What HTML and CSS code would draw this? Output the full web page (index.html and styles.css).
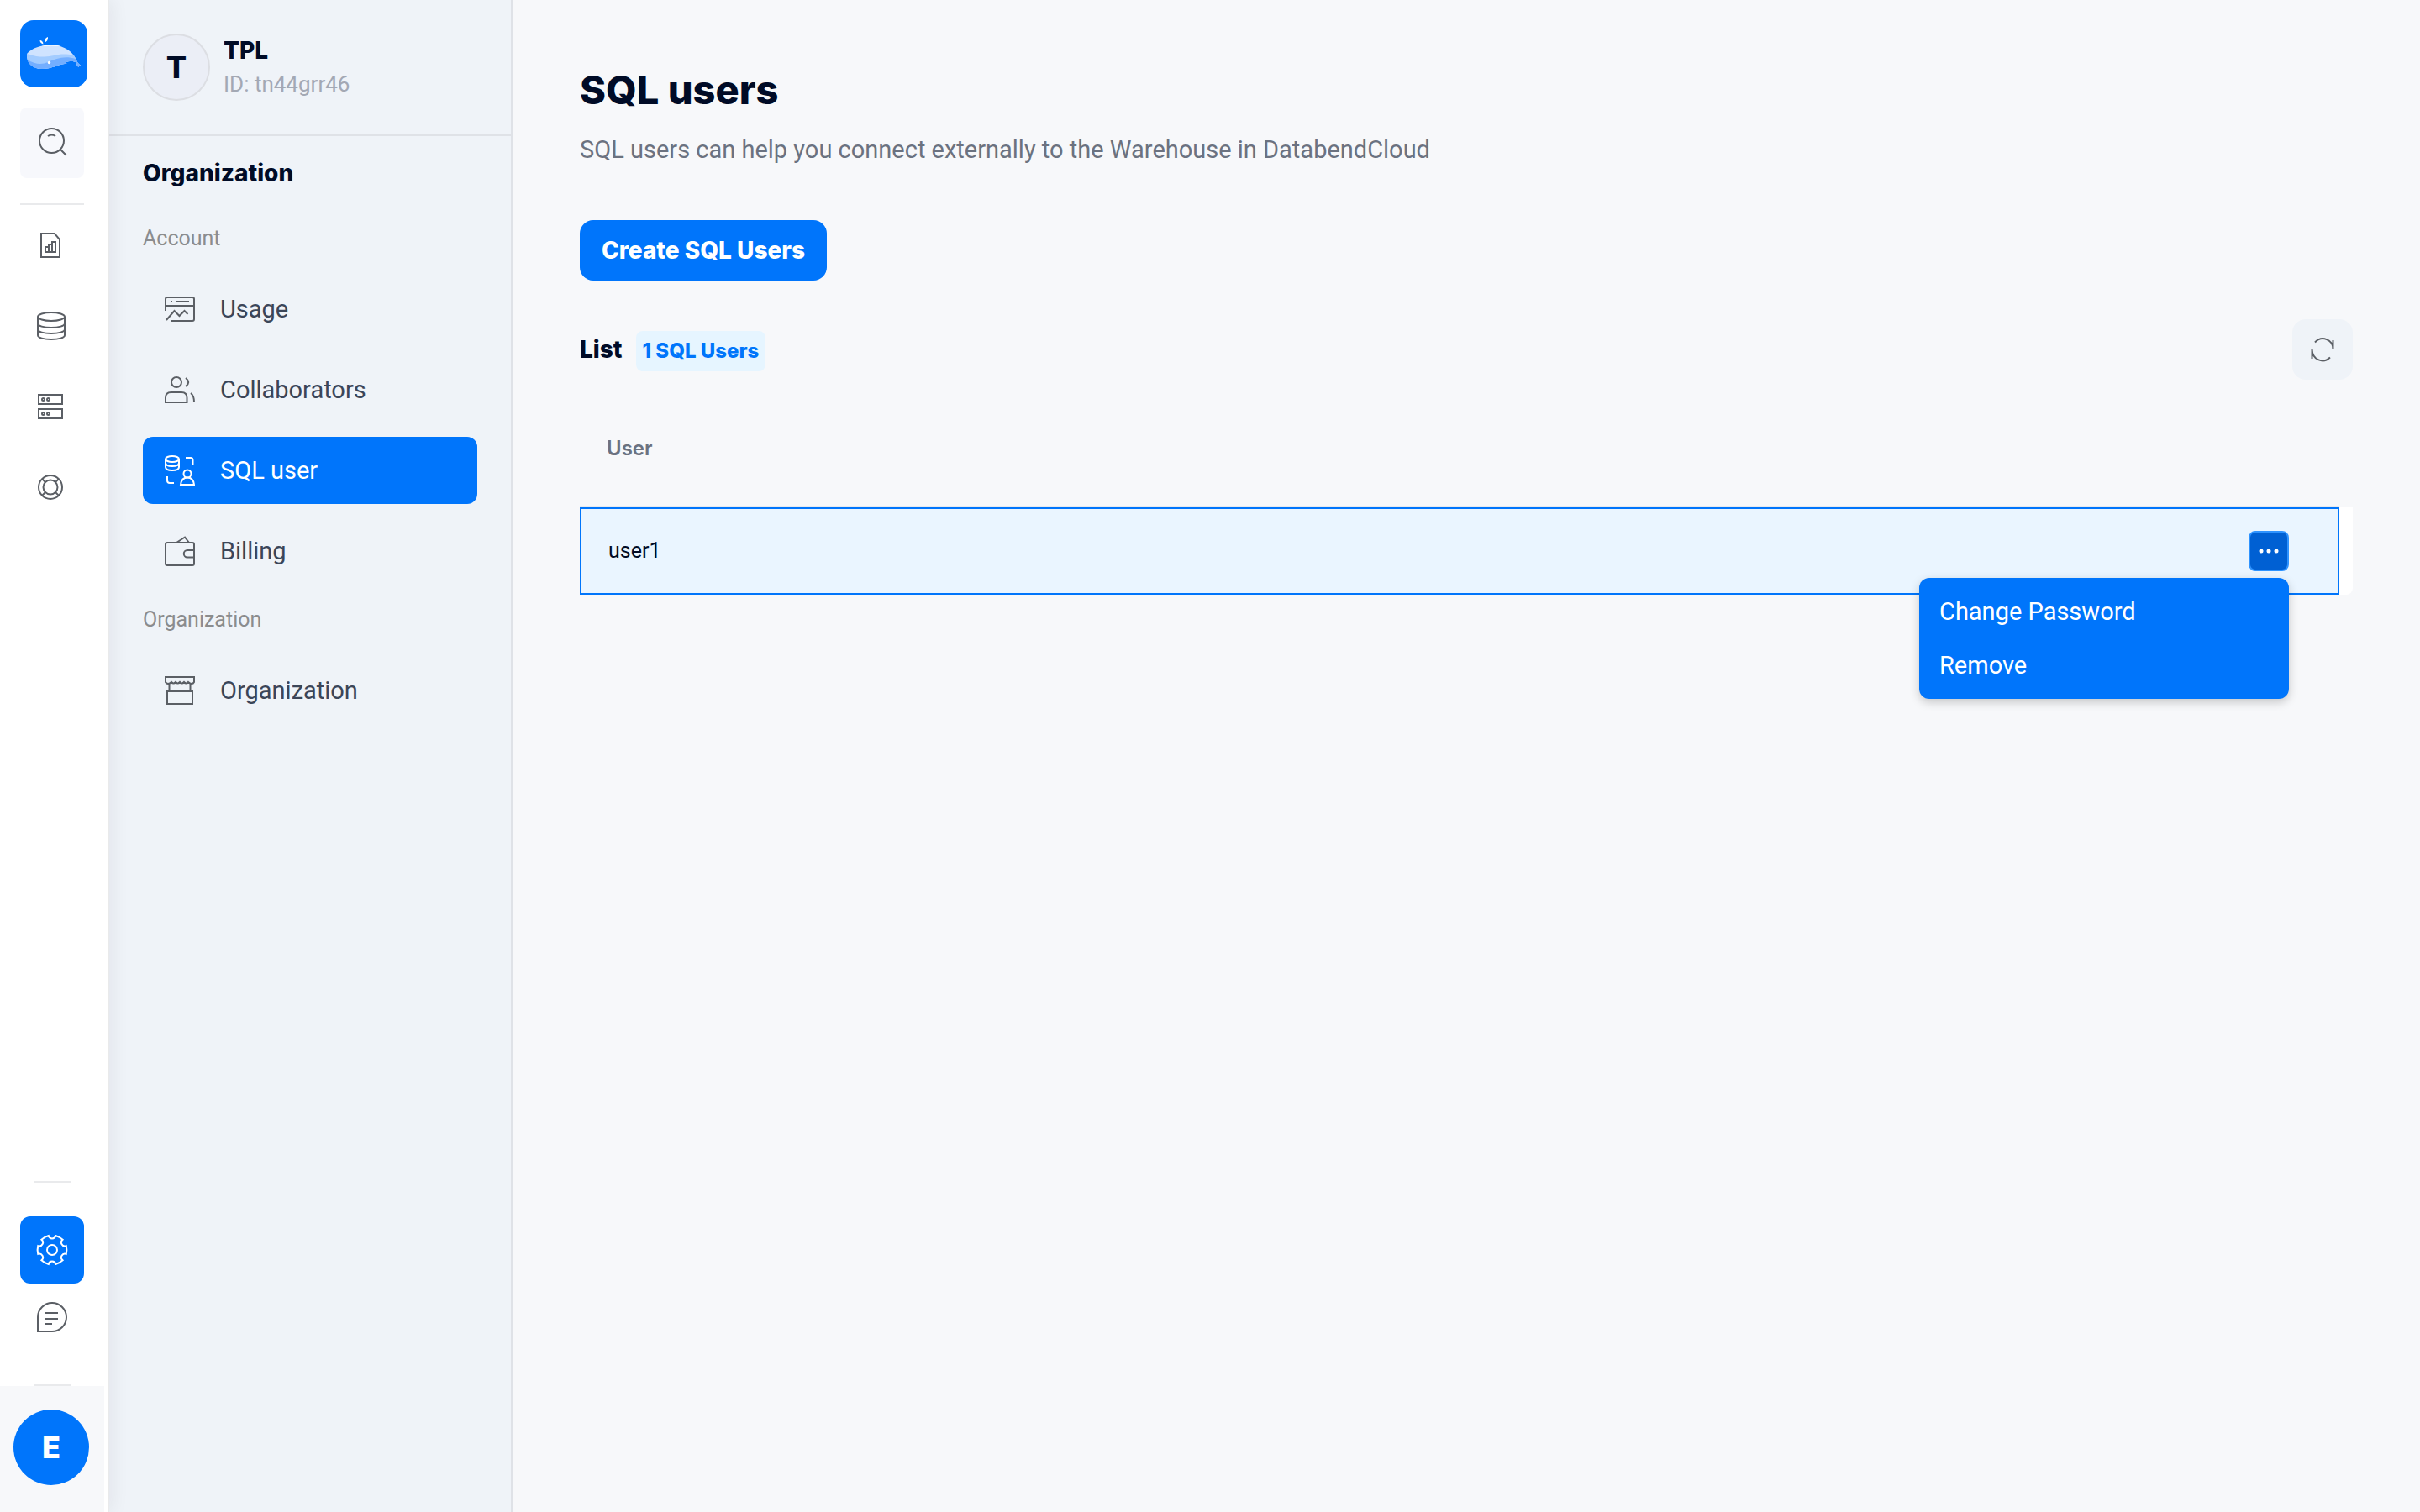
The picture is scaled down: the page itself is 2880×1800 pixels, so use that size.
FILE: index.html
```html
<!DOCTYPE html>
<html lang="en">
<head>
<meta charset="utf-8">
<meta name="viewport" content="width=device-width, initial-scale=1">
<title>SQL users</title>
<link rel="stylesheet" href="styles.css">
</head>
<body>
<div class="app">
  <nav class="rail" aria-label="Main">
    <a class="logo" href="#" aria-label="Home">
      <svg viewBox="0 0 80 80" aria-hidden="true">
        <path fill="#cfe3ff" d="M8 40C14 33 25 29.5 37 29.5C54 30 64 39 67 48Q68 51 72 54Q69 54 69.5 56Q67 54 67 51C64 48 58 49 54 50Q57 52 53 52C44 53 38 58 26 58C14 58 7 50 8 40z"/>
        <path fill="#a3ccff" d="M8 40C16 42 20 44 29 43.5C40 43 48 38 64 42Q66 45 67 48Q68 51 72 54Q69 54 69.5 56Q67 54 67 51C64 48 58 49 54 50Q57 52 53 52C44 53 38 58 26 58C14 58 7 50 8 40z"/>
        <path fill="#73aeff" d="M8.5 47C18 53 26 53 33 50C43 45 54 42 66 46Q68 51 72 54Q69 54 69.5 56Q67 54 67 51C64 48 58 49 54 50Q57 52 53 52C44 53 38 58 26 58C16 58 10 53 8.5 47z"/>
        <path fill="#fff" d="M23.5 24q3.5 0 4 4.5-4-1.5-4-4.5zM33 20q.5 5-4 6.5-.5-5 4-6.5zM25 31q12-4 24 0-12-1-24 0z"/>
        <circle cx="34.5" cy="50.5" r="1.7" fill="#fff"/>
      </svg>
    </a>
    <button class="rail-search" type="button" aria-label="Search">
      <svg class="icon-lg" viewBox="0 0 48 48" aria-hidden="true"><circle cx="23.5" cy="21.5" r="14.5"/><path d="M34 32l7 7M19 16q4.5-3 9 0"/></svg>
    </button>
    <div class="rail-line rail-line-wide"></div>
    <a class="rail-item" href="#" aria-label="Worksheets">
      <svg class="icon-lg" viewBox="0 0 48 48" aria-hidden="true"><path d="M11 10h16l6 7v21H11zM16 32v-6h4v6M20 32v-9h4v9M24 32V20h4v12M15 32h14"/></svg>
    </a>
    <a class="rail-item" href="#" aria-label="Data">
      <svg class="icon-lg" viewBox="0 0 48 48" aria-hidden="true"><ellipse cx="23" cy="13" rx="16" ry="5"/><path d="M7 13v22c0 3 7 5 16 5s16-2 16-5V13M7 21c0 3 7 5 16 5s16-2 16-5M7 28c0 3 7 5 16 5s16-2 16-5"/></svg>
    </a>
    <a class="rail-item" href="#" aria-label="Warehouses">
      <svg class="icon-lg" viewBox="0 0 48 48" aria-hidden="true"><path d="M8 10h28v11H8zM8 27h28v11H8z"/><circle cx="13.5" cy="15.5" r="1.5"/><circle cx="19.5" cy="15.5" r="1.5"/><circle cx="13.5" cy="32.5" r="1.5"/><circle cx="19.5" cy="32.5" r="1.5"/></svg>
    </a>
    <a class="rail-item" href="#" aria-label="Help">
      <svg class="icon-lg" viewBox="0 0 48 48" aria-hidden="true"><circle cx="22" cy="24" r="14"/><circle cx="22" cy="24" r="8.5"/><path d="M12 14l4 4M32 14l-4 4M12 34l4-4M32 34l-4-4"/></svg>
    </a>
    <div class="rail-bottom">
      <div class="rail-line"></div>
      <a class="rail-action active" href="#" aria-label="Settings" aria-current="page">
        <svg class="icon-lg" viewBox="0 0 48 48" aria-hidden="true"><path d="M19.8 7A4.3 4.3 0 0 0 28.2 7Q33 8.5 36.6 11.8A4.3 4.3 0 0 0 40.8 19.2Q42 24 40.8 28.8A4.3 4.3 0 0 0 36.6 36.2Q33 39.5 28.2 41A4.3 4.3 0 0 0 19.8 41Q15 39.5 11.4 36.2A4.3 4.3 0 0 0 7.2 28.8Q6 24 7.2 19.2A4.3 4.3 0 0 0 11.4 11.8Q15 8.5 19.8 7z"/><circle cx="24" cy="24" r="6"/></svg>
      </a>
      <a class="rail-action" href="#" aria-label="Messages">
        <svg class="icon-lg" viewBox="0 0 48 48" aria-hidden="true"><path d="M7 41V24a17 17 0 1 1 17 17zM16 19h15M16 26h15M16 32h8"/></svg>
      </a>
      <div class="rail-line rail-line-user"></div>
      <div class="rail-user"><button class="user-avatar" type="button">E</button></div>
    </div>
  </nav>

  <aside class="sidebar">
    <header class="org">
      <span class="org-avatar">T</span>
      <div>
        <div class="org-name">TPL</div>
        <div class="org-id">ID: tn44grr46</div>
      </div>
    </header>
    <nav class="menu" aria-label="Organization">
      <h2 class="menu-title">Organization</h2>
      <h3 class="menu-group">Account</h3>
      <ul class="menu-list">
        <li><a class="menu-item" href="#">
          <svg class="icon" viewBox="0 0 36 36" aria-hidden="true"><path d="M1 20V6q0-2 2-2h30q2 0 2 2v24q0 2-2 2H8M1 14h34M7 9h2M14 9h15M2 31l9.5-11 6 6 6-6 4 4"/></svg>
          Usage</a></li>
        <li><a class="menu-item" href="#">
          <svg class="icon" viewBox="0 0 36 36" aria-hidden="true"><circle cx="14" cy="9" r="6"/><path d="M1 33v-5.5q0-6.5 6.5-6.5h12.5q6.5 0 6.5 6.5v5.5zM25 4q6.5 5 0 10M31 22q4 3 4 11"/></svg>
          Collaborators</a></li>
        <li><a class="menu-item active" href="#" aria-current="page">
          <svg class="icon" viewBox="0 0 36 36" aria-hidden="true"><ellipse cx="9" cy="4.5" rx="8" ry="3.5"/><path d="M1 4.5v9.5q0 4 8 4t8-4V4.5M1 9q0 4 8 4t8-4M25 3h6q2.5 0 2.5 3v5M3 25v5q0 3 3 3h5M19 35q1-8.5 8-8.5t8 8.5z"/><circle cx="27" cy="22" r="4.5"/></svg>
          SQL user</a></li>
        <li><a class="menu-item" href="#">
          <svg class="icon" viewBox="0 0 36 36" aria-hidden="true"><rect x="1" y="8" width="34" height="27" rx="2"/><path d="M14 8l10-6.5L29 8M35 17h-8a4 4 0 0 0 0 8.5h8"/></svg>
          Billing</a></li>
      </ul>
      <h3 class="menu-group">Organization</h3>
      <ul class="menu-list">
        <li><a class="menu-item" href="#">
          <svg class="icon" viewBox="0 0 36 36" aria-hidden="true"><path d="M1 2h34v6q-1 2-3 2t-4-2q-2.5 3-5 0q-2.5 3-5 0q-2.5 3-5 0q-2.5 3-5 0q-2 2-4 2t-3-2zM5.5 10v9M30.5 10v9M3 19h30v15H3z"/></svg>
          Organization</a></li>
      </ul>
    </nav>
  </aside>

  <main class="content">
    <h1 class="page-title">SQL users</h1>
    <p class="page-desc">SQL users can help you connect externally to the Warehouse in DatabendCloud</p>
    <button class="create" type="button">Create SQL Users</button>
    <div class="list-head">
      <h2 class="list-title">List</h2>
      <span class="tag">1 SQL Users</span>
      <button class="refresh" type="button" aria-label="Refresh">
        <svg class="icon" viewBox="0 0 36 36" aria-hidden="true"><path d="M9 9.5C17 1 31 6 30.5 18V7M27 27.5C19 35 6 31 5.5 18v11"/></svg>
      </button>
    </div>
    <table class="users">
      <thead>
        <tr><th scope="col">User</th><td class="col-action"></td><td class="col-gutter"></td></tr>
      </thead>
      <tbody>
        <tr>
          <td class="cell-name">user1</td>
          <td class="cell-action">
            <div class="dropdown">
              <button class="more" type="button" aria-label="Actions" aria-haspopup="menu" aria-expanded="true">
                <svg viewBox="0 0 24 6" aria-hidden="true"><circle cx="3" cy="3" r="2.5"/><circle cx="12" cy="3" r="2.5"/><circle cx="21" cy="3" r="2.5"/></svg>
              </button>
              <div class="dropdown-menu" role="menu">
                <button class="dropdown-item" type="button" role="menuitem">Change Password</button>
                <button class="dropdown-item" type="button" role="menuitem">Remove</button>
              </div>
            </div>
          </td>
          <td class="cell-gutter"></td>
        </tr>
      </tbody>
    </table>
  </main>
</div>
</body>
</html>
```

FILE: styles.css
```css
:root {
  --blue: #0075fb;
  --ink: #000b26;
  --muted: #6b7280;
  --line: #dfe2e7;
  --stroke: #5b5f65;
  --strong: Inter, Roboto, sans-serif;
}

* {
  box-sizing: border-box;
}

body {
  margin: 0;
  background: #f7f8fa;
  color: var(--ink);
  font-family: Roboto, "Noto Sans", sans-serif;
  font-size: 29px;
  line-height: 40px;
}

h1, h2, h3, p, ul {
  margin: 0;
  padding: 0;
}

ul {
  list-style: none;
}

a {
  color: inherit;
  text-decoration: none;
}

button {
  border: 0;
  padding: 0;
  font: inherit;
  color: inherit;
  background: none;
  cursor: pointer;
}

svg {
  display: block;
}

.icon,
.icon-lg {
  flex: none;
  width: 36px;
  height: 36px;
  fill: none;
  stroke: var(--stroke);
  stroke-width: 2;
}

.icon-lg {
  width: 48px;
  height: 48px;
}

.app {
  display: flex;
  min-height: 100vh;
}

/* Icon rail */
.rail {
  position: relative;
  z-index: 1;
  flex: none;
  display: flex;
  flex-direction: column;
  width: 130px;
  padding-top: 24px;
  background: #fff;
  border-right: 2px solid #e9eaeb;
  box-shadow: 4px 0 20px rgba(30, 20, 40, .06);
}

.logo {
  width: 80px;
  height: 80px;
  margin-left: 24px;
  border-radius: 16px;
  background: var(--blue);
}

.rail-search,
.rail-item,
.rail-action {
  display: flex;
  align-items: center;
  justify-content: center;
  width: 76px;
  margin-left: 24px;
}

.rail-search {
  height: 84px;
  margin-top: 24px;
  border-radius: 8px;
  background: #f7f8fc;
}

.rail-line {
  width: 44px;
  height: 2px;
  margin-left: 40px;
  background: #e9eaec;
}

.rail-line-wide {
  width: 76px;
  margin: 30px 0 0 24px;
}

.rail-item {
  height: 96px;
}

.rail-bottom {
  margin-top: auto;
}

.rail-action {
  height: 80px;
  border-radius: 12px;
}

.rail-action.active {
  margin-top: 40px;
  background: var(--blue);
}

.rail-line-user {
  margin-top: 40px;
}

.rail-user {
  width: 124px;
  height: 150px;
  padding: 28px 16px;
  background: #f7f8fa;
}

.user-avatar {
  width: 90px;
  height: 90px;
  border-radius: 50%;
  background: var(--blue);
  color: #fff;
  font-family: var(--strong);
  font-size: 36px;
  font-weight: 800;
}

.active .icon,
.active .icon-lg {
  stroke: #fff;
}

/* Sidebar */
.sidebar {
  flex: none;
  width: 480px;
  background: #eff3f8;
  border-right: 2px solid var(--line);
}

.org {
  display: flex;
  align-items: center;
  gap: 16px;
  padding: 40px;
  border-bottom: 2px solid var(--line);
}

.org > div {
  margin: -4px 0;
}

.org-avatar {
  display: flex;
  align-items: center;
  justify-content: center;
  width: 80px;
  height: 80px;
  border: 2px solid #dcdee3;
  border-radius: 50%;
  background: #ebeef6;
  font-family: var(--strong);
  font-size: 36px;
  font-weight: 800;
}

.org-name,
.menu-title,
.list-title,
.create {
  font-family: var(--strong);
  font-size: 28px;
  font-weight: 800;
}

.org-id {
  color: #a3a8b4;
  font-size: 26px;
}

.menu {
  padding: 24px 40px;
}

.menu-group {
  margin-top: 38px;
  color: #8b8c8e;
  font-size: 25px;
  font-weight: 400;
}

.menu-list {
  display: flex;
  flex-direction: column;
  gap: 16px;
  margin-top: 24px;
}

.menu-list + .menu-group {
  margin-top: 22px;
}

.menu-item {
  display: flex;
  align-items: center;
  gap: 30px;
  height: 80px;
  padding: 0 26px;
  border-radius: 12px;
  color: #3b4558;
}

.menu-item.active {
  background: var(--blue);
  color: #fff;
}

/* Main content */
.content {
  flex: 1;
  min-width: 0;
  padding: 80px;
}

.page-title {
  font-family: var(--strong);
  font-size: 47px;
  line-height: 54px;
  font-weight: 800;
}

.page-desc {
  margin-top: 24px;
  color: var(--muted);
}

.create {
  height: 72px;
  margin-top: 64px;
  padding: 0 26px;
  border-radius: 16px;
  background: var(--blue);
  color: #fff;
}

.list-head {
  display: flex;
  align-items: center;
  margin-top: 46px;
}

.tag {
  margin: 4px 0 0 16px;
  padding: 4px 8px;
  border-radius: 8px;
  background: #e6f5ff;
  color: var(--blue);
  font-family: var(--strong);
  font-size: 24px;
  font-weight: 800;
}

.refresh {
  display: flex;
  align-items: center;
  justify-content: center;
  width: 72px;
  height: 72px;
  margin-left: auto;
  border-radius: 16px;
  background: #eff3f8;
}

.users {
  width: 100%;
  margin-top: 12px;
  border-collapse: separate;
  border-spacing: 0;
  font-size: 25px;
}

.users td {
  padding: 0;
}

.users th {
  height: 140px;
  padding: 2px 32px 0;
  border-bottom: 2px solid #e8eaed;
  color: var(--muted);
  font-family: var(--strong);
  font-size: 24px;
  font-weight: 600;
  text-align: left;
}

.users .col-action {
  width: 108px;
  border-bottom: 2px solid #e8eaed;
}

.col-gutter {
  width: 16px;
}

.users tbody td {
  height: 104px;
}

.users .cell-name {
  padding: 0 32px;
  border: 2px solid var(--blue);
  border-right: 0;
  background: #eaf5ff;
}

.users .cell-action {
  border: 2px solid var(--blue);
  border-left: 0;
  background: #eaf5ff;
}

.users .cell-gutter {
  border-radius: 0 0 8px 0;
  background: #fff;
}

.dropdown {
  position: relative;
  width: 48px;
}

.more {
  display: flex;
  align-items: center;
  justify-content: center;
  width: 48px;
  height: 48px;
  border: 2px solid #2e93ff;
  border-radius: 8px;
  background: #0060d3;
}

.more svg {
  width: 24px;
  fill: #fff;
}

.dropdown-menu {
  position: absolute;
  top: 56px;
  right: 0;
  width: 440px;
  padding: 8px 0;
  border-radius: 12px;
  background: var(--blue);
  box-shadow: 0 4px 12px rgba(0, 0, 0, .2);
}

.dropdown-item {
  display: block;
  width: 100%;
  height: 64px;
  padding: 0 24px;
  color: #fff;
  font-size: 29px;
  text-align: left;
}
```
